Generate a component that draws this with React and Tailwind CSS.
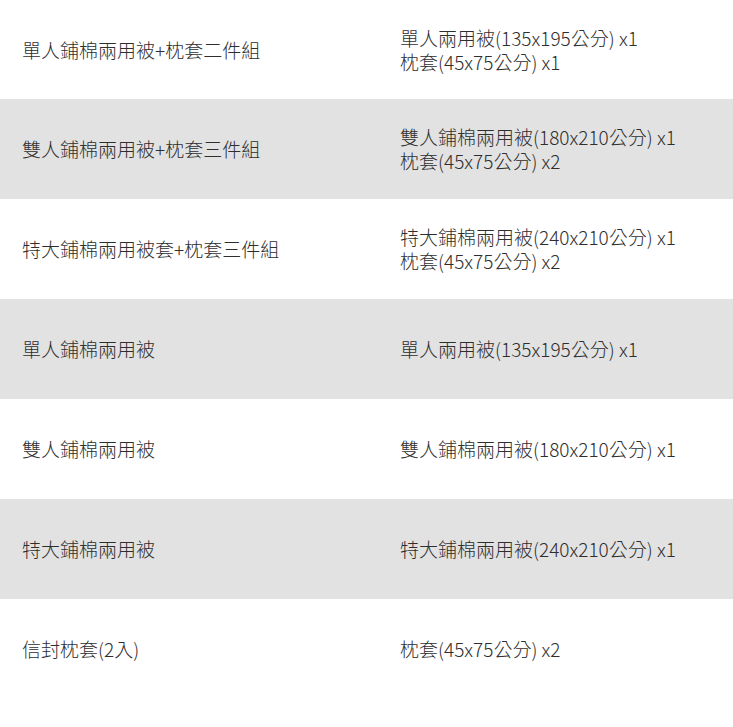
import React from "react";

const ROWS = [
  { name: "單人鋪棉兩用被+枕套二件組", items: ["單人兩用被(135x195公分) x1", "枕套(45x75公分) x1"] },
  { name: "雙人鋪棉兩用被+枕套三件組", items: ["雙人鋪棉兩用被(180x210公分) x1", "枕套(45x75公分) x2"] },
  { name: "特大鋪棉兩用被套+枕套三件組", items: ["特大鋪棉兩用被(240x210公分) x1", "枕套(45x75公分) x2"] },
  { name: "單人鋪棉兩用被", items: ["單人兩用被(135x195公分) x1"] },
  { name: "雙人鋪棉兩用被", items: ["雙人鋪棉兩用被(180x210公分) x1"] },
  { name: "特大鋪棉兩用被", items: ["特大鋪棉兩用被(240x210公分) x1"] },
  { name: "信封枕套(2入)", items: ["枕套(45x75公分) x2"] },
];

export default function App() {
  return (
    <div
      className="w-[733px] min-h-[727px] bg-white text-[#2e2e2e] text-[19px] leading-[24px] font-light"
      style={{ fontFamily: '"Segoe UI", "Noto Sans CJK TC", "Noto Sans", sans-serif' }}
    >
      <div className="flex flex-col">
        {ROWS.map((row, i) => (
          <div
            key={i}
            className={
              "grid grid-cols-[378px_1fr] items-center " +
              (i === 0 ? "h-[99px] " : "h-[100px] ") +
              (i % 2 === 1 ? "bg-[#e2e2e2]" : "bg-white")
            }
          >
            <div className="pl-[22px]">{row.name}</div>
            <div className="pl-[22px]">
              {row.items.map((t, j) => (
                <div key={j}>{t}</div>
              ))}
            </div>
          </div>
        ))}
      </div>
    </div>
  );
}
